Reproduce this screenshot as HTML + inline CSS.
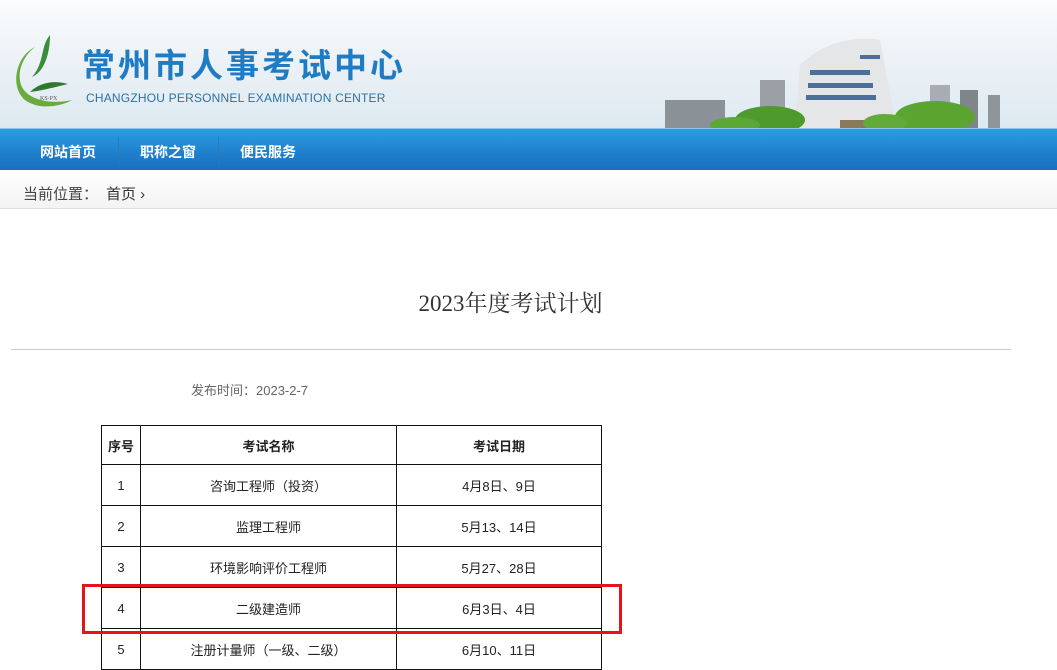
<!DOCTYPE html>
<html><head><meta charset="utf-8"><style>
*{margin:0;padding:0;box-sizing:border-box}
body{width:1057px;height:656px;overflow:hidden;background:#fff;font-family:"Liberation Sans","Noto Sans CJK SC",sans-serif;position:relative}
.hd{position:absolute;left:0;top:0;width:1057px;height:128px;background:linear-gradient(#fbfcfd 0%,#eef3f7 40%,#dde9f1 100%)}
.nav{position:absolute;left:0;top:128px;width:1057px;height:42px;background:linear-gradient(#2a9ee0,#1f7fcc 60%,#1a6fbf);border-top:1px solid #8cc8ee}
.nav span{position:absolute;top:13px;color:#fff;font-weight:bold;font-size:14px}
.sep{position:absolute;top:8px;width:1px;height:28px;background:#2d7ab8}
.bc{position:absolute;left:0;top:170px;width:1057px;height:39px;background:linear-gradient(#fff,#f3f3f3);border-bottom:1px solid #ddd;font-size:15px;color:#444}
.abs{position:absolute}
table{position:absolute;left:101px;top:425px;border-collapse:collapse;font-size:13px;color:#222}
td{border:1px solid #111;text-align:center;height:41px}
th{border:1px solid #111;height:39px;font-size:13px}
</style></head><body>
<div class="hd">
 <svg class="abs" style="left:10px;top:32px" width="70" height="80" viewBox="0 0 70 80">
  <path d="M40 3 C30 15 35 30 22 45 C34 40 40 22 40 3Z" fill="#3a8d3a"/>
  <path d="M25 15 C5 25 0 55 15 68 C28 78 50 75 62 68 C45 72 20 70 12 55 C6 42 12 25 25 15Z" fill="#6aab3c"/>
  <path d="M20 60 C30 50 45 48 58 52 C45 55 35 58 20 60Z" fill="#2d7a2d"/>
  <text x="30" y="68" font-size="6" fill="#555" font-family="Liberation Serif">KS·PX</text>
 </svg>
 <div class="abs" style="left:82px;top:42px;font-size:33px;font-weight:bold;color:#1f7cc4;letter-spacing:3px;font-family:'Noto Sans CJK SC',sans-serif;line-height:42px">常州市人事考试中心</div>
 <div class="abs" style="left:86px;top:91px;font-size:12px;color:#2a72a8;letter-spacing:0.2px">CHANGZHOU PERSONNEL EXAMINATION CENTER</div>
 <svg class="abs" style="left:660px;top:25px" width="360" height="103" viewBox="0 0 360 103">
  <rect x="5" y="75" width="60" height="28" fill="#8a9298"/>
  <rect x="100" y="55" width="25" height="48" fill="#9aa0a5"/>
  <path d="M135 103 L140 40 C160 20 190 10 220 15 L235 95 L235 103Z" fill="#e4e6e8"/>
  <g fill="#4a6f9a"><rect x="150" y="45" width="60" height="5"/><rect x="148" y="58" width="65" height="5"/><rect x="146" y="70" width="70" height="5"/><rect x="200" y="30" width="20" height="4"/></g>
  <rect x="180" y="95" width="80" height="10" fill="#8a7a5a"/>
  <rect x="270" y="60" width="20" height="43" fill="#a7adb2"/>
  <rect x="300" y="65" width="18" height="38" fill="#7e868c"/>
  <rect x="328" y="70" width="12" height="33" fill="#8e969b"/>
  <ellipse cx="110" cy="95" rx="35" ry="14" fill="#4f9a2d"/>
  <ellipse cx="75" cy="100" rx="25" ry="8" fill="#5ca836"/>
  <ellipse cx="275" cy="92" rx="40" ry="16" fill="#5aa530"/>
  <ellipse cx="225" cy="98" rx="22" ry="9" fill="#62ab3a"/>
 </svg>
</div>
<div class="nav">
 <span style="left:40px">网站首页</span><div class="sep" style="left:118px"></div>
 <span style="left:140px">职称之窗</span><div class="sep" style="left:218px"></div>
 <span style="left:240px">便民服务</span>
</div>
<div class="bc"><span class="abs" style="left:23px;top:13px">当前位置：</span><span class="abs" style="left:106px;top:13px;color:#333">首页 ›</span></div>
<div class="abs" style="left:0;width:1021px;top:285px;text-align:center;font-size:23px;color:#333;font-family:'Liberation Serif','Noto Serif CJK SC',serif">2023年度考试计划</div>
<div class="abs" style="left:11px;top:349px;width:1000px;height:1px;background:#ccc"></div>
<div class="abs" style="left:191px;top:380px;font-size:13px;color:#666">发布时间：2023-2-7</div>
<table>
<tr><th style="width:39px">序号</th><th style="width:256px">考试名称</th><th style="width:205px">考试日期</th></tr>
<tr><td>1</td><td>咨询工程师（投资）</td><td>4月8日、9日</td></tr>
<tr><td>2</td><td>监理工程师</td><td>5月13、14日</td></tr>
<tr><td>3</td><td>环境影响评价工程师</td><td>5月27、28日</td></tr>
<tr><td>4</td><td>二级建造师</td><td>6月3日、4日</td></tr>
<tr><td>5</td><td>注册计量师（一级、二级）</td><td>6月10、11日</td></tr>
</table>
<div class="abs" style="left:82px;top:584px;width:540px;height:50px;border:3px solid #e8121a"></div>
</body></html>
